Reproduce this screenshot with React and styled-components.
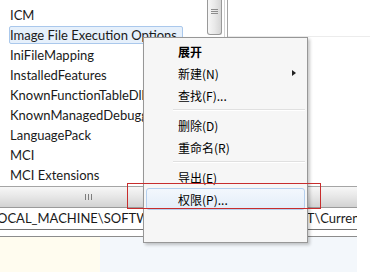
import React from "react";
import styled, { createGlobalStyle } from "styled-components";

const GlobalStyle = createGlobalStyle`
  html, body {
    margin: 0;
    padding: 0;
    background: #fff;
  }
  body {
    width: 370px;
    height: 272px;
    overflow: hidden;
  }
`;

const keys = [
  "ICM",
  "Image File Execution Options",
  "IniFileMapping",
  "InstalledFeatures",
  "KnownFunctionTableDlls",
  "KnownManagedDebuggingDlls",
  "LanguagePack",
  "MCI",
  "MCI Extensions",
];

const menuItems = [
  { label: "展开", bold: true },
  { label: "新建(N)", sub: true },
  { label: "查找(F)..." },
  { sep: true },
  { label: "删除(D)" },
  { label: "重命名(R)" },
  { sep: true },
  { label: "导出(E)" },
  { label: "权限(P)...", hover: true },
];

function App() {
  return (
    <Screen>
      <GlobalStyle />
      <Top>
        <TreePane>
          {keys.map((k, i) => (
            <TreeRow key={k}>
              <Label selected={i === 1}>{k}</Label>
            </TreeRow>
          ))}
        </TreePane>
        <VScroll>
          <VThumb>
            <VGrip />
          </VThumb>
        </VScroll>
        <Splitter />
        <RightPane>
          <RightHeader />
        </RightPane>
      </Top>
      <Bottom>
        <HScroll>
          <HGrip />
        </HScroll>
        <PathRow>OCAL_MACHINE\SOFTWARE\Microsoft\Windows NT\CurrentVersion</PathRow>
        <Panels>
          <CreamPanel />
          <BluePanel />
        </Panels>
      </Bottom>

      <ContextMenu>
        {menuItems.map((m, i) =>
          m.sep ? (
            <Separator key={i}>
              <SepLine />
            </Separator>
          ) : (
            <MenuItem key={i} hover={m.hover} bold={m.bold}>
              {m.label}
              {m.sub && <SubArrow />}
            </MenuItem>
          )
        )}
      </ContextMenu>
      <RedMark />
    </Screen>
  );
}

export default App;

const Screen = styled.div`
  position: relative;
  width: 370px;
  height: 272px;
  overflow: hidden;
  background: #fff;
  font-family: Lato, "Noto Sans", sans-serif;
  color: #1a1a1a;
`;

const Top = styled.div`
  display: flex;
  height: 185px;
`;

const TreePane = styled.div`
  width: 207px;
  padding-top: 5px;
  box-sizing: border-box;
  overflow: hidden;
`;

const TreeRow = styled.div`
  height: 20px;
  display: flex;
  align-items: center;
  padding-left: 9px;
  white-space: nowrap;
  font-size: 13px;
`;

const Label = styled.span`
  display: inline-block;
  line-height: 16px;
  padding: 0 5px 0 0;
  border: 1px solid ${(p) => (p.selected ? "#aac8ec" : "transparent")};
  background: ${(p) => (p.selected ? "#e6f0fb" : "transparent")};
  border-radius: 2px;
`;

const VScroll = styled.div`
  width: 17px;
`;

const VThumb = styled.div`
  width: 15px;
  height: 35px;
  box-sizing: border-box;
  border: 1px solid #999;
  border-top: none;
  border-radius: 0 0 3px 3px;
  background: linear-gradient(to right, #f7f7f7, #e9e9e9 50%, #d6d6d6);
  padding-top: 9px;
`;

const VGrip = styled.div`
  width: 7px;
  height: 5px;
  margin-left: 3px;
  background: repeating-linear-gradient(to bottom, #8c8c8c 0 1px, transparent 1px 2px);
`;

const Splitter = styled.div`
  width: 4px;
  box-sizing: border-box;
  border-left: 1px solid #d4d4d4;
  border-right: 1px solid #a3a3a3;
`;

const RightPane = styled.div`
  flex: 1;
`;

const RightHeader = styled.div`
  height: 36px;
  border-bottom: 1px solid #ececec;
`;

const Bottom = styled.div`
  width: 357px;
  margin-top: 1px;
`;

const HScroll = styled.div`
  height: 22px;
  box-sizing: border-box;
  border-top: 1px solid #a5a5a5;
  border-bottom: 1px solid #9a9a9a;
  background: linear-gradient(to bottom, #f7f7f7, #e6e6e6 50%, #d2d2d2);
  display: flex;
  align-items: center;
`;

const HGrip = styled.div`
  width: 7px;
  height: 6px;
  margin-left: 85px;
  background: repeating-linear-gradient(to right, #7d7d7d 0 1px, transparent 1px 3px);
`;

const PathRow = styled.div`
  height: 21px;
  line-height: 21px;
  font-size: 13px;
  white-space: nowrap;
  overflow: hidden;
  text-indent: -3px;
  border-bottom: 1px solid #727272;
`;

const Panels = styled.div`
  display: flex;
  height: 40px;
  margin-top: 6px;
  border-top: 1px solid #8c8c8c;
`;

const CreamPanel = styled.div`
  width: 100px;
  background: #fffcef;
`;

const BluePanel = styled.div`
  flex: 1;
  background: #f3f7fb;
`;

const ContextMenu = styled.div`
  position: absolute;
  left: 143px;
  top: 37px;
  width: 165px;
  height: 206px;
  box-sizing: border-box;
  border: 1px solid #979797;
  background: #f6f6f6;
  box-shadow: 2px 2px 3px rgba(0, 0, 0, 0.22);
  padding: 2px;
  font-family: "Noto Sans CJK SC", sans-serif;
  font-size: 12px;
  color: #000;
`;

const MenuItem = styled.div`
  height: 22px;
  box-sizing: border-box;
  display: flex;
  align-items: center;
  padding-left: 31px;
  font-weight: ${(p) => (p.bold ? 700 : 400)};
  border: 1px solid ${(p) => (p.hover ? "#b4cfee" : "transparent")};
  border-radius: 3px;
  background: ${(p) => (p.hover ? "linear-gradient(to bottom, #f3f7fd, #e3edf9)" : "transparent")};
`;

const SubArrow = styled.span`
  margin-left: auto;
  margin-right: 8px;
  width: 0;
  height: 0;
  border-left: 4px solid #222;
  border-top: 3.5px solid transparent;
  border-bottom: 3.5px solid transparent;
`;

const Separator = styled.div`
  height: 8px;
  display: flex;
  align-items: center;
`;

const SepLine = styled.div`
  flex: 1;
  margin-left: 27px;
  height: 1px;
  background: #e0e0e0;
  border-bottom: 1px solid #fff;
`;

const RedMark = styled.div`
  position: absolute;
  left: 127px;
  top: 183px;
  width: 194px;
  height: 26px;
  box-sizing: border-box;
  border: 1px solid #c72d2d;
`;
